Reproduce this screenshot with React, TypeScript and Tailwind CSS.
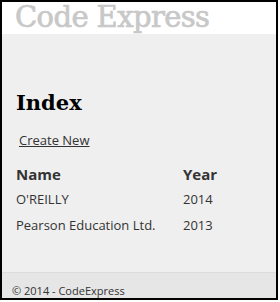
import React from 'react';

const books = [
  { name: "O'REILLY", year: 2014 },
  { name: 'Pearson Education Ltd.', year: 2013 },
];

export default function App() {
  return (
    <div className="w-[280px] h-[302px] bg-white">
      <div className="w-[278px] h-[300px] border-2 border-black flex flex-col font-['Open_Sans',sans-serif] text-[#333]">
        {/* Header */}
        <div className="h-[32px] bg-white pl-[13px] relative z-10">
          <div className="font-['DejaVu_Serif',serif] text-[29px] leading-[31px] text-[#c8c8c8] tracking-[-0.6px] [-webkit-text-stroke:0.7px_#c8c8c8]">
            Code Express
          </div>
        </div>

        {/* Body */}
        <div className="flex-1 bg-[#efefef] px-[14px] pt-[56px]">
          <h1 className="font-['DejaVu_Serif',serif] font-bold text-[21px] leading-[26px] text-black">Index</h1>
          <a href="#" className="block mt-[15px] ml-[3px] text-[13px] leading-[18px] underline text-[#333]">
            Create New
          </a>
          <table className="mt-[14px] text-[13px]">
            <thead>
              <tr>
                <th className="text-left font-bold text-[15px] w-[167px]">Name</th>
                <th className="text-left font-bold text-[15px]">Year</th>
              </tr>
            </thead>
            <tbody>
              {books.map((b) => (
                <tr key={b.name}>
                  <td className="py-[4px] leading-[18px]">{b.name}</td>
                  <td className="py-[4px] leading-[18px]">{b.year}</td>
                </tr>
              ))}
            </tbody>
          </table>
        </div>

        {/* Footer */}
        <div className="h-[26px] bg-[#e6e6e6] border-t border-[#dcdcdc] pl-[10px] pt-[11px] text-[11px] leading-[14px] text-[#333]">
          © 2014 - CodeExpress
        </div>
      </div>
    </div>
  );
}
